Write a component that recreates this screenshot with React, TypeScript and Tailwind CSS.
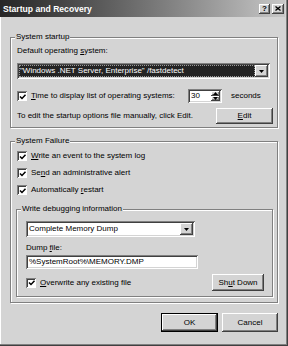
import React from "react";

const raised =
  "bg-[#d4d4d4] shadow-[inset_-1px_-1px_#404040,inset_1px_1px_#ffffff,inset_-2px_-2px_#808080]";
const sunken =
  "bg-white shadow-[inset_1px_1px_#808080,inset_-1px_-1px_#ffffff,inset_2px_2px_#404040,inset_-2px_-2px_#d4d4d4]";

function Arrow() {
  return (
    <svg width="5" height="3" viewBox="0 0 5 3">
      <path d="M0 0h5L2.5 3z" fill="#000" />
    </svg>
  );
}

function DropBtn() {
  return (
    <div className={`${raised} w-[13px] h-full flex items-center justify-center shrink-0`}>
      <Arrow />
    </div>
  );
}

function Check() {
  return (
    <span className="w-[10px] h-[10px] shrink-0 flex items-center justify-center bg-white shadow-[inset_1px_1px_#808080,inset_-1px_-1px_#ffffff,inset_2px_2px_#404040]">
      <svg width="8" height="8" viewBox="0 0 8 8" className="ml-[1px] mt-[1px]">
        <path d="M1 3.5 L3 5.5 L6.5 1.8" stroke="#000" strokeWidth="1.5" fill="none" />
      </svg>
    </span>
  );
}

function Btn({ children, className }: { children: React.ReactNode; className: string }) {
  return <div className={`${raised} flex items-center justify-center ${className}`}>{children}</div>;
}

export default function App() {
  return (
    <div className="w-[288px] h-[346px] bg-[#d4d4d4] shadow-[inset_-1px_-1px_#404040,inset_-2px_-2px_#808080,inset_1px_0_#ffffff] flex flex-col text-black text-[8px] leading-[10px] [font-family:'Liberation_Sans',Arial,sans-serif]">
      {/* title bar */}
      <div className="h-[17px] w-[285px] shrink-0 flex items-center pl-[3px] pr-[1px] bg-linear-to-r from-[#262626] to-[#c8c8c8]">
        <span className="text-white font-bold text-[8.6px]">Startup and Recovery</span>
        <div className="ml-auto flex gap-[2px]">
          <Btn className="w-[11px] h-[10px] font-bold text-[8px]">?</Btn>
          <Btn className="w-[12px] h-[10px]">
            <svg width="6" height="5" viewBox="0 0 6 5">
              <path d="M0.5 0.5L5.5 4.5M5.5 0.5L0.5 4.5" stroke="#000" strokeWidth="1.3" />
            </svg>
          </Btn>
        </div>
      </div>

      <div className="flex flex-col pl-[10px] pt-[15px]">
        {/* System startup */}
        <fieldset className="w-[268px] border border-[#808080] shadow-[inset_1px_1px_#ffffff,1px_1px_#ffffff]">
          <legend className="ml-[4px] px-[1px] bg-[#d4d4d4]">System startup</legend>
          <div className="flex flex-col pl-[6px] pr-[4px] pt-[4px] pb-[3px]">
            <span>
              Default operating <u>s</u>ystem:
            </span>
            <div className={`${sunken} mt-[7px] h-[16px] w-[253px] flex p-[2px]`}>
              <div className="flex-1 bg-[#242424] text-white flex items-center pl-[1px] outline outline-1 outline-dotted outline-[#9a9a9a] outline-offset-[-1px]">
                "Windows .NET Server, Enterprise" /fastdetect
              </div>
              <DropBtn />
            </div>

            <div className="mt-[10px] h-[14px] flex items-center">
              <Check />
              <span className="ml-[4px] w-[157px]">
                <u>T</u>ime to display list of operating systems:
              </span>
              <div className={`${sunken} w-[34px] h-[14px] flex p-[2px]`}>
                <span className="flex-1 pl-[1px] flex items-center">30</span>
                <div className="w-[9px] flex flex-col">
                  <div className={`${raised} flex-1 flex items-center justify-center`}>
                    <svg width="5" height="3" viewBox="0 0 5 3">
                      <path d="M0 3h5L2.5 0z" fill="#000" />
                    </svg>
                  </div>
                  <div className={`${raised} flex-1 flex items-center justify-center`}>
                    <Arrow />
                  </div>
                </div>
              </div>
              <span className="ml-[9px]">seconds</span>
            </div>

            <div className="mt-[5px] h-[16px] flex items-center">
              <span>To edit the startup options file manually, click Edit.</span>
              <Btn className="ml-auto w-[57px] h-[16px]">
                <span>
                  <u>E</u>dit
                </span>
              </Btn>
            </div>
          </div>
        </fieldset>

        {/* System Failure */}
        <fieldset className="mt-[8px] w-[268px] border border-[#808080] shadow-[inset_1px_1px_#ffffff,1px_1px_#ffffff]">
          <legend className="ml-[4px] px-[1px] bg-[#d4d4d4]">System Failure</legend>
          <div className="flex flex-col pl-[6px] pt-[4px] pb-[5px]">
            <div className="h-[12px] flex items-center">
              <Check />
              <span className="ml-[4px]">
                <u>W</u>rite an event to the system log
              </span>
            </div>
            <div className="mt-[5px] h-[12px] flex items-center">
              <Check />
              <span className="ml-[4px]">
                Se<u>n</u>d an administrative alert
              </span>
            </div>
            <div className="mt-[5px] h-[12px] flex items-center">
              <Check />
              <span className="ml-[4px]">
                Automatically <u>r</u>estart
              </span>
            </div>

            {/* Write debugging information */}
            <fieldset className="mt-[8px] ml-[-1px] w-[257px] border border-[#808080] shadow-[inset_1px_1px_#ffffff,1px_1px_#ffffff]">
              <legend className="ml-[4px] px-[1px] bg-[#d4d4d4]">Write debugging information</legend>
              <div className="flex flex-col pl-[9px] pr-[8px] pt-[7px] pb-[5px]">
                <div className={`${sunken} h-[16px] w-[169px] flex p-[2px]`}>
                  <span className="flex-1 pl-[1px] flex items-center">Complete Memory Dump</span>
                  <DropBtn />
                </div>
                <span className="mt-[6px]">
                  Dump <u>f</u>ile:
                </span>
                <div className={`${sunken} mt-[2px] h-[14px] w-[172px] flex items-center pl-[3px]`}>
                  %SystemRoot%\MEMORY.DMP
                </div>
                <div className="mt-[5px] h-[17px] flex items-center">
                  <Check />
                  <span className="ml-[4px]">
                    <u>O</u>verwrite any existing file
                  </span>
                  <Btn className="ml-auto w-[52px] h-[17px]">
                    <span>
                      Sh<u>u</u>t Down
                    </span>
                  </Btn>
                </div>
              </div>
            </fieldset>
          </div>
        </fieldset>

        {/* dialog buttons */}
        <div className="mt-[10px] flex justify-end gap-[4px] w-[268px]">
          <div className="w-[57px] h-[19px] border border-black">
            <Btn className="w-full h-full">OK</Btn>
          </div>
          <Btn className="w-[56px] h-[19px]">Cancel</Btn>
        </div>
      </div>
    </div>
  );
}
